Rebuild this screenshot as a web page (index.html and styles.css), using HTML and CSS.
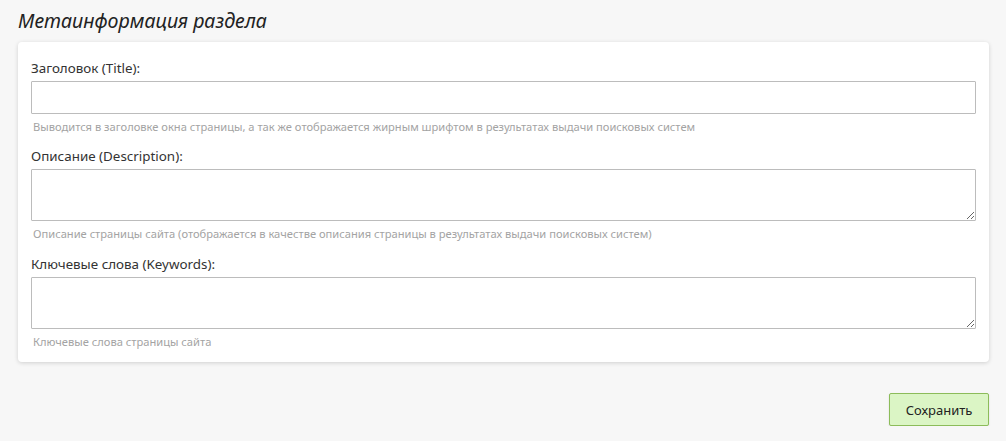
FILE: index.html
```html
<!DOCTYPE html>
<html lang="ru">
<head>
<meta charset="utf-8">
<title>Метаинформация раздела</title>
<link rel="stylesheet" href="styles.css">
</head>
<body>
<div class="page">
  <h2 class="section-title">Метаинформация раздела</h2>
  <div class="card">
    <div class="field">
      <label class="field-label" for="title">Заголовок (Title):</label>
      <input class="control" id="title" type="text">
      <div class="help">Выводится в заголовке окна страницы, а так же отображается жирным шрифтом в результатах выдачи поисковых систем</div>
    </div>
    <div class="field">
      <label class="field-label" for="desc">Описание (Description):</label>
      <textarea class="control area" id="desc"></textarea>
      <div class="help">Описание страницы сайта (отображается в качестве описания страницы в результатах выдачи поисковых систем)</div>
    </div>
    <div class="field">
      <label class="field-label" for="kw">Ключевые слова (Keywords):</label>
      <textarea class="control area" id="kw"></textarea>
      <div class="help">Ключевые слова страницы сайта</div>
    </div>
  </div>
  <div class="actions">
    <button class="btn-save" type="button">Сохранить</button>
  </div>
</div>
</body>
</html>
```
FILE: styles.css
```css
html, body {
  margin: 0;
  padding: 0;
  background: #f7f7f7;
}
body {
  font-family: "Noto Sans", "Open Sans", sans-serif;
  color: #333;
}
.page {
  padding: 8px 17px 0 18px;
}
.section-title {
  margin: 0 0 8px 0;
  font-size: 19.6px;
  line-height: 26px;
  font-weight: normal;
  font-style: italic;
  color: #222;
}
.card {
  background: #fff;
  border-radius: 4px;
  box-shadow: 0 1px 4px rgba(0, 0, 0, 0.16);
  padding: 16px 13px 12px 13px;
}
.field {
  display: flex;
  flex-direction: column;
  margin-bottom: 11px;
}
.field:last-child {
  padding-top: 1px;
  margin-bottom: 0;
}
.field-label {
  font-size: 13.4px;
  line-height: 20px;
  color: #333;
  margin-bottom: 3px;
}
.control {
  box-sizing: border-box;
  width: 100%;
  height: 33px;
  margin: 0;
  border: 1px solid #bcbcbc;
  border-radius: 1px;
  background: #fff;
  font-family: inherit;
  font-size: 13px;
  padding: 4px 8px;
}
.area {
  height: 52px;
  resize: vertical;
  display: block;
}
.help {
  margin-top: 5px;
  font-size: 11.15px;
  line-height: 16px;
  color: #a3a3a3;
  padding-left: 2px;
}
.actions {
  display: flex;
  justify-content: flex-end;
  margin-top: 31px;
}
.btn-save {
  box-sizing: border-box;
  width: 100px;
  height: 33px;
  background: #dbf5c5;
  border: 1px solid #8cbc5a;
  border-radius: 2px;
  font-family: inherit;
  font-size: 13px;
  color: #222;
  box-shadow: 0 1px 2px rgba(0, 0, 0, 0.12);
  cursor: pointer;
}
```
